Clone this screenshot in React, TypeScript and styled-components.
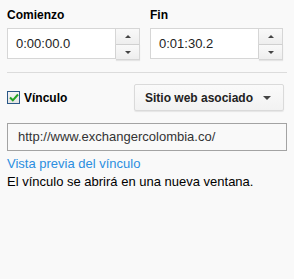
import React from "react";
import styled, { createGlobalStyle } from "styled-components";

const Global = createGlobalStyle`
  html, body { margin: 0; padding: 0; background: #f9f9f9; }
  body { font-family: "Liberation Sans", Arial, sans-serif; }
`;

const Page = styled.div`
  width: 294px;
  height: 279px;
  box-sizing: border-box;
  padding: 8px 7px 0 7px;
  background: #f9f9f9;
  color: #000;
`;

const TimeRow = styled.div`
  display: flex;
  gap: 10px;
`;

const TimeColumn = styled.div`
  display: flex;
  flex-direction: column;
  width: 133px;
`;

const Label = styled.div`
  font-weight: bold;
  font-size: 12px;
  line-height: 14px;
  margin-bottom: 6px;
  padding-left: ${(p: { $indent?: number }) => p.$indent ?? 0}px;
`;

const Spinner = styled.div`
  display: flex;
  height: 32px;
`;

const TimeInput = styled.div`
  box-sizing: border-box;
  flex: 1;
  height: 31px;
  background: #fff;
  border: 1px solid #d6d6d6;
  padding-left: 8px;
  font-size: 13px;
  line-height: 29px;
  color: #222;
`;

const SpinButtons = styled.div`
  display: flex;
  flex-direction: column;
  width: 24px;
`;

const SpinButton = styled.div<{ $down?: boolean }>`
  box-sizing: border-box;
  height: 16px;
  display: flex;
  align-items: center;
  justify-content: center;
  background: linear-gradient(#f9f9f9, #eeeeee);
  border: 1px solid #d6d6d6;
  border-left: none;
  ${(p) => (p.$down ? "border-top: 1px solid #d0d0d0; box-shadow: 0 1px 1px rgba(0,0,0,0.08);" : "border-bottom: none;")}
`;

const Tri = styled.span<{ $down?: boolean; $w?: number; $h?: number }>`
  width: 0;
  height: 0;
  border-left: ${(p) => (p.$w ?? 6) / 2}px solid transparent;
  border-right: ${(p) => (p.$w ?? 6) / 2}px solid transparent;
  ${(p) =>
    p.$down
      ? `border-top: ${p.$h ?? 3}px solid #444;`
      : `border-bottom: ${p.$h ?? 3}px solid #444;`}
`;

const Separator = styled.div`
  height: 1px;
  background: #dcdcdc;
  margin: 12px 0 11px 0;
`;

const LinkRow = styled.div`
  display: flex;
  align-items: center;
  height: 27px;
  padding-right: 3px;
`;

const CheckBox = styled.span`
  box-sizing: border-box;
  width: 13px;
  height: 13px;
  border: 1px solid #2a5888;
  background: linear-gradient(#f4f4f4, #e4e4e4);
  display: flex;
  align-items: center;
  justify-content: center;
`;

const CheckLabel = styled.span`
  font-weight: bold;
  font-size: 12px;
  margin-left: 4px;
`;

const DropButton = styled.div`
  box-sizing: border-box;
  margin-left: auto;
  width: 150px;
  height: 27px;
  display: flex;
  align-items: center;
  justify-content: space-between;
  padding: 0 12px 0 10px;
  background: linear-gradient(#fafafa, #f2f2f2);
  border: 1px solid #dadada;
  border-radius: 2px;
  box-shadow: 0 1px 1px rgba(0, 0, 0, 0.08);
  font-weight: bold;
  font-size: 12px;
  color: #222;
`;

const UrlInput = styled.div`
  box-sizing: border-box;
  margin-top: 12px;
  height: 28px;
  border: 1px solid #a3a3a3;
  background: #f9f9f9;
  padding-left: 10px;
  font-size: 13px;
  line-height: 26px;
  color: #333;
`;

const PreviewLink = styled.a`
  display: block;
  margin-top: 4px;
  font-size: 13px;
  line-height: 18px;
  color: #2b8ee0;
  text-decoration: none;
`;

const Note = styled.div`
  font-size: 13px;
  line-height: 18px;
  color: #000;
`;

const TimeField = ({ label, value, indent }: { label: string; value: string; indent?: number }) => (
  <TimeColumn>
    <Label $indent={indent}>{label}</Label>
    <Spinner>
      <TimeInput>{value}</TimeInput>
      <SpinButtons>
        <SpinButton>
          <Tri />
        </SpinButton>
        <SpinButton $down>
          <Tri $down />
        </SpinButton>
      </SpinButtons>
    </Spinner>
  </TimeColumn>
);

export default function App() {
  return (
    <Page>
      <Global />
      <TimeRow>
        <TimeField label="Comienzo" value="0:00:00.0" indent={-1} />
        <TimeField label="Fin" value="0:01:30.2" />
      </TimeRow>
      <Separator />
      <LinkRow>
        <CheckBox>
          <svg width="10" height="9" viewBox="0 0 10 9">
            <path d="M1 4.5 L3.8 7.3 L9 1.5" fill="none" stroke="#23a323" strokeWidth="2" />
          </svg>
        </CheckBox>
        <CheckLabel>Vínculo</CheckLabel>
        <DropButton>
          <span>Sitio web asociado</span>
          <Tri $down $w={8} $h={4} />
        </DropButton>
      </LinkRow>
      <UrlInput>http://www.exchangercolombia.co/</UrlInput>
      <PreviewLink href="#">Vista previa del vínculo</PreviewLink>
      <Note>El vínculo se abrirá en una nueva ventana.</Note>
    </Page>
  );
}
